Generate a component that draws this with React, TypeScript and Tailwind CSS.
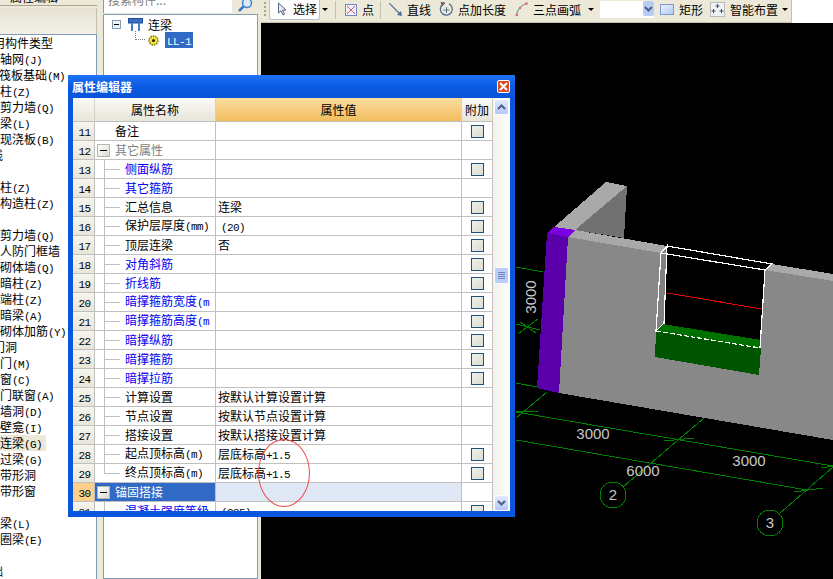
const leftItems: [string, number][] = [
	["用构件类型", -7],
	["轴网(J)", 0],
	["筏板基础(M)", -1],
	["柱(Z)", 0],
	["剪力墙(Q)", 0],
	["梁(L)", 0],
	["现浇板(B)", 0],
	["线", -9],
	["", 0],
	["柱(Z)", 0],
	["构造柱(Z)", 0],
	["", 0],
	["剪力墙(Q)", 0],
	["人防门框墙", 0],
	["砌体墙(Q)", 0],
	["暗柱(Z)", 0],
	["端柱(Z)", 0],
	["暗梁(A)", 0],
	["砌体加筋(Y)", 0],
	["门洞", -7],
	["门(M)", 0],
	["窗(C)", 0],
	["门联窗(A)", 0],
	["墙洞(D)", 0],
	["壁龛(I)", 0],
	["连梁(G)", 0],
	["过梁(G)", 0],
	["带形洞", 0],
	["带形窗", 0],
	["", 0],
	["梁(L)", 0],
	["圈梁(E)", 0],
	["", 0],
	["础", -9],
];

type Row = {
	n: number;
	name: string;
	value?: string;
	kind?: "plain" | "group" | "blue" | "black" | "active";
	check?: boolean;
	last?: boolean;
};

const rows: Row[] = [
	{ n: 11, name: "备注", kind: "plain", check: true },
	{ n: 12, name: "其它属性", kind: "group" },
	{ n: 13, name: "侧面纵筋", kind: "blue", check: true },
	{ n: 14, name: "其它箍筋", kind: "blue" },
	{ n: 15, name: "汇总信息", value: "连梁", kind: "black", check: true },
	{ n: 16, name: "保护层厚度(mm)", value: "(20)", kind: "black", check: true },
	{ n: 17, name: "顶层连梁", value: "否", kind: "black", check: true },
	{ n: 18, name: "对角斜筋", kind: "blue", check: true },
	{ n: 19, name: "折线筋", kind: "blue", check: true },
	{ n: 20, name: "暗撑箍筋宽度(m", kind: "blue", check: true },
	{ n: 21, name: "暗撑箍筋高度(m", kind: "blue", check: true },
	{ n: 22, name: "暗撑纵筋", kind: "blue", check: true },
	{ n: 23, name: "暗撑箍筋", kind: "blue", check: true },
	{ n: 24, name: "暗撑拉筋", kind: "blue", check: true },
	{ n: 25, name: "计算设置", value: "按默认计算设置计算", kind: "black" },
	{ n: 26, name: "节点设置", value: "按默认节点设置计算", kind: "black" },
	{ n: 27, name: "搭接设置", value: "按默认搭接设置计算", kind: "black" },
	{ n: 28, name: "起点顶标高(m)", value: "层底标高+1.5", kind: "black", check: true },
	{ n: 29, name: "终点顶标高(m)", value: "层底标高+1.5", kind: "black", check: true, last: true },
	{ n: 30, name: "锚固搭接", kind: "active" },
	{ n: 31, name: "混凝土强度等级", value: "(C35)", kind: "blue", check: true },
];

// SimSun latin glyphs are half a CJK cell wide, so latin runs are squeezed to 6px
function Mixed({ text }: { text: string }) {
	const parts = text.split(/([\x20-\x7e]+)/).filter(Boolean);
	return (
		<>
			{parts.map((p, i) =>
				/^[\x20-\x7e]+$/.test(p) ? (
					<span key={i} className="whitespace-pre text-[11px] tracking-[-0.6px] [font-family:'Liberation_Mono',monospace]">
						{p}
					</span>
				) : (
					<span key={i}>{p}</span>
				),
			)}
		</>
	);
}

function MinusBox({ small }: { small?: boolean }) {
	return (
		<div
			className={
				small
					? "flex h-[9px] w-[9px] items-center justify-center border border-[#7f9db9] bg-[#f2f1ea]"
					: "flex h-[13px] w-[13px] shrink-0 items-center justify-center border border-[#b5b5a8] bg-gradient-to-br from-white to-[#dcdad0]"
			}
		>
			<div className={small ? "h-px w-[5px] bg-black" : "h-px w-[7px] bg-black"} />
		</div>
	);
}

function Guide({ last }: { last?: boolean }) {
	return (
		<div className="flex h-full w-[16px] shrink-0 flex-col">
			<div className="h-[10px] border-b border-l border-[#c0c0c0]" />
			<div className={last ? "flex-1" : "flex-1 border-l border-[#c0c0c0]"} />
		</div>
	);
}

function CheckBox() {
	return <div className="h-[13px] w-[13px] border border-[#1c5180] bg-gradient-to-br from-[#f0efe8] to-[#dcdcd4]" />;
}

function TableRow({ row }: { row: Row }) {
	const active = row.kind === "active";
	const inset = row.value?.startsWith("(");
	return (
		<div className="flex h-[19px] shrink-0 border-b border-[#c0c0c0] text-[12px] leading-[18px]">
			<div
				className={
					active
						? "w-[22px] shrink-0 border-r border-[#c0c0c0] bg-[#fcd08c] pl-[2px] text-center"
						: "w-[22px] shrink-0 border-r border-[#c0c0c0] bg-gradient-to-b from-[#f6f5ee] to-[#e8e6da] pl-[2px] text-center"
				}
			>
				<Mixed text={String(row.n)} />
			</div>
			<div
				className={
					active
						? "flex w-[121px] shrink-0 items-center overflow-hidden whitespace-nowrap border-r border-[#c0c0c0] bg-[#316ac5] pl-[2px] text-white"
						: "flex w-[121px] shrink-0 items-center overflow-hidden whitespace-nowrap border-r border-[#c0c0c0]"
				}
			>
				{row.kind === "plain" && (
					<div className="pl-[20px]">
						<Mixed text={row.name} />
					</div>
				)}
				{row.kind === "group" && (
					<>
						<div className="ml-[2px]">
							<MinusBox />
						</div>
						<div className="pl-[5px] text-[#808080]">{row.name}</div>
					</>
				)}
				{active && (
					<>
						<MinusBox />
						<div className="pl-[5px]">{row.name}</div>
					</>
				)}
				{(row.kind === "blue" || row.kind === "black") && (
					<>
						<div className="ml-[9px] h-full">
							<Guide last={row.last} />
						</div>
						<div className={row.kind === "blue" ? "pl-[5px] text-[#0000f0]" : "pl-[5px] text-black"}>
							<Mixed text={row.name} />
						</div>
					</>
				)}
			</div>
			<div
				className={
					active
						? "w-[246px] shrink-0 border-r border-[#c0c0c0] bg-[#dfe8f4]"
						: inset
							? "w-[246px] shrink-0 whitespace-nowrap border-r border-[#c0c0c0] pl-[5px]"
							: "w-[246px] shrink-0 whitespace-nowrap border-r border-[#c0c0c0] pl-[2px]"
				}
			>
				{row.value && <Mixed text={row.value} />}
			</div>
			<div className="flex w-[31px] shrink-0 items-center justify-center border-r border-[#c0c0c0] pl-px">
				{row.check && <CheckBox />}
			</div>
		</div>
	);
}

function ScrollBtn({ up }: { up?: boolean }) {
	return (
		<div className="flex h-[16px] w-[15px] items-center justify-center rounded-[2px] border border-white bg-gradient-to-b from-[#e2ebfe] to-[#b4c8f6]">
			<svg width="9" height="6" viewBox="0 0 9 6">
				<path d={up ? "M1 5l3.5-3.5L8 5" : "M1 1l3.5 3.5L8 1"} fill="none" stroke="#4d6185" strokeWidth="2" />
			</svg>
		</div>
	);
}

function PropertyWindow() {
	return (
		<div className="absolute left-[68px] top-[75px] flex h-[442px] w-[447px] flex-col rounded-t-[3px] bg-[#0a56dc] text-black">
			<div className="flex h-[23px] shrink-0 items-center justify-between bg-gradient-to-b from-[#1f74f4] via-[#0a5ae4] to-[#0a54d8] pl-[4px] pr-[5px]">
				<span className="text-[12px] font-bold text-white">属性编辑器</span>
				<div className="flex h-[13px] w-[13px] items-center justify-center rounded-[2px] border border-white bg-[#dc4a24]">
					<svg width="9" height="9" viewBox="0 0 9 9">
						<path d="M1 1l7 7M8 1l-7 7" stroke="white" strokeWidth="2" />
					</svg>
				</div>
			</div>
			<div className="mx-[5px] flex h-[413px] overflow-hidden bg-white">
				<div className="flex w-[420px] shrink-0 flex-col overflow-hidden">
					<div className="flex h-[24px] shrink-0 border-b border-[#c0c0c0] text-center text-[12px] leading-[23px]">
						<div className="w-[22px] shrink-0 border-r border-[#d4d0c8] bg-gradient-to-b from-[#faf9f4] to-[#e8e6da]" />
						<div className="w-[121px] shrink-0 border-r border-[#d4d0c8] bg-gradient-to-b from-[#faf9f4] to-[#e8e6da]">属性名称</div>
						<div className="w-[246px] shrink-0 border-r border-[#d4d0c8] bg-gradient-to-b from-[#fbdc9e] to-[#f2bd5e]">属性值</div>
						<div className="w-[31px] shrink-0 border-r border-[#d4d0c8] bg-gradient-to-b from-[#faf9f4] to-[#e8e6da]">附加</div>
					</div>
					{rows.map((row) => (
						<TableRow key={row.n} row={row} />
					))}
				</div>
				<div className="flex w-[17px] flex-col items-center bg-gradient-to-r from-[#f3f1ec] to-[#fdfdfa] pt-[1px]">
					<ScrollBtn up />
					<div className="mt-[152px] flex h-[17px] w-[15px] flex-col items-center justify-center gap-px rounded-[2px] border border-white bg-[#bccdf8]">
						<div className="h-px w-[7px] bg-[#6c86c0]" />
						<div className="h-px w-[7px] bg-[#6c86c0]" />
						<div className="h-px w-[7px] bg-[#6c86c0]" />
						<div className="h-px w-[7px] bg-[#6c86c0]" />
					</div>
					<div className="mt-[211px]">
						<ScrollBtn />
					</div>
				</div>
			</div>
		</div>
	);
}

function DropArrow() {
	return <div className="h-0 w-0 shrink-0 border-x-[3px] border-t-[3px] border-x-transparent border-t-black" />;
}

function Toolbar() {
	return (
		<div className="flex h-[23px] w-[531px] shrink-0 items-center border-b border-r border-[#c4c1b0] bg-[#ece9d8] pb-[3px] text-[12px] text-black">
			<div className="ml-[3px] flex h-[16px] w-[2px] flex-col gap-[2px]">
				<div className="h-[2px] bg-[#a8a595]" />
				<div className="h-[2px] bg-[#a8a595]" />
				<div className="h-[2px] bg-[#a8a595]" />
				<div className="h-[2px] bg-[#a8a595]" />
			</div>
			<div className="ml-[3px] flex h-[21px] w-[51px] shrink-0 items-center rounded-b-[3px] border border-t-0 border-[#b4c4dc] bg-white pl-[7px]">
				<svg width="10" height="14" viewBox="0 0 10 14">
					<path d="M1.5 1v10l2.5-2.2L6 13l1.6-.8-2-4.1H9z" fill="#e8ecf4" stroke="#54647c" />
				</svg>
				<span className="ml-[6px]">选择</span>
			</div>
			<div className="ml-[2px] w-[6px]">
				<DropArrow />
			</div>
			<div className="ml-[7px] h-[18px] w-px bg-[#c4c1b0]" />
			<svg className="ml-[9px] shrink-0" width="12" height="12" viewBox="0 0 12 12">
				<rect x="0.5" y="0.5" width="11" height="11" fill="#eef0fa" stroke="#7486c0" />
				<path d="M2 2l8 8M10 2l-8 8" stroke="#d06070" />
			</svg>
			<span className="ml-[5px] w-[12px] shrink-0">点</span>
			<div className="ml-[6px] h-[18px] w-px bg-[#c4c1b0]" />
			<svg className="ml-[8px] shrink-0" width="13" height="13" viewBox="0 0 13 13">
				<path d="M0 0l11 11" stroke="#4c6c9c" strokeWidth="1.2" />
				<path d="M13 13l-1-5-4 4z" fill="#4c6c9c" />
			</svg>
			<span className="ml-[5px] w-[24px] shrink-0">直线</span>
			<svg className="ml-[8px] shrink-0" width="15" height="15" viewBox="0 0 15 15">
				<path d="M3 3a6 6 0 1 0 7-1.2" fill="none" stroke="#4c6c9c" strokeWidth="1.3" />
				<path d="M2 0l4 1-3 3zM7.500 5v6M4.500 8h6" fill="#b06040" stroke="#44587c" strokeWidth="0.8" />
			</svg>
			<span className="ml-[4px] w-[48px] shrink-0">点加长度</span>
			<svg className="ml-[9px] shrink-0" width="13" height="15" viewBox="0 0 13 15">
				<path d="M1.500 14C2 8 6 3 12 1.500" fill="none" stroke="#6c8cb4" strokeWidth="1.2" />
				<circle cx="1.800" cy="13" r="1.300" fill="#e07060" />
				<circle cx="5" cy="6" r="1.200" fill="#e07060" />
				<circle cx="11.500" cy="1.600" r="1.300" fill="#e07060" />
			</svg>
			<span className="ml-[5px] w-[48px] shrink-0">三点画弧</span>
			<div className="ml-[7px] w-[6px]">
				<DropArrow />
			</div>
			<div className="ml-[6px] flex h-[17px] w-[54px] shrink-0 justify-end bg-white">
				<div className="flex h-[15px] w-[11px] items-center justify-center rounded-[2px] bg-[#b8ccf6]">
					<svg width="9" height="6" viewBox="0 0 9 6">
						<path d="M1 1l3.500 3.500L8 1" fill="none" stroke="#4d6185" strokeWidth="2" />
					</svg>
				</div>
			</div>
			<div className="ml-[6px] h-[11px] w-[14px] shrink-0 border border-[#7a9ad4] bg-gradient-to-br from-[#eaf0fc] to-[#b4cbf4]" />
			<span className="ml-[5px] w-[24px] shrink-0">矩形</span>
			<svg className="ml-[7px] shrink-0" width="15" height="15" viewBox="0 0 15 15">
				<rect x="0.500" y="0.500" width="14" height="14" fill="#f0f2f4" stroke="#808890" strokeDasharray="1 1" />
				<path d="M7.500 2v4M5.500 4h4M3.500 7v4M1.500 9h4M11.500 7v4M9.500 9h4" stroke="#405060" />
			</svg>
			<span className="ml-[5px] w-[48px] shrink-0">智能布置</span>
			<div className="ml-[4px] w-[6px]">
				<DropArrow />
			</div>
		</div>
	);
}

function Scene() {
	const green = "#008000";
	const lines = [
		[516, 267, 543, 272],
		[516, 324, 540, 330],
		[520, 322, 536, 333],
		[518, 334, 538, 319],
		[516, 383, 537, 387],
		[516, 418, 547, 392],
		[516, 412, 833, 466],
		[516, 440, 807, 490],
		[516, 412, 538, 411],
		[664, 441, 694, 438],
		[794, 492, 823, 488],
		[821, 468, 833, 466],
		[623, 487, 704, 418],
		[779, 514, 833, 467],
	];
	return (
		<svg className="h-full w-full" viewBox="261 23 572 556" shapeRendering="crispEdges">
			{lines.map((l, i) => (
				<line key={i} x1={l[0]} y1={l[1]} x2={l[2]} y2={l[3]} stroke={green} />
			))}
			<circle cx="613" cy="495" r="13" fill="none" stroke={green} />
			<circle cx="770" cy="523" r="13" fill="none" stroke={green} />

			<polygon points="554,227 606,182 627,186 575,230" fill="#a9a9a9" />
			<polygon points="627,186 624,238 575,230" fill="#717171" />
			<polygon points="568,237 575,230 667,246 661,253" fill="#a9a9a9" />
			<polygon points="765,270 772,264 833,274 833,281" fill="#a9a9a9" />
			<polygon points="568,237 661,253 655,357 759,375 765,270 833,281 833,440 559,393" fill="#888888" />
			<polygon points="661,253 667,246 664,324 656,331" fill="#808080" />
			<polygon points="547,233 554,227 575,230 568,237" fill="#7a00e0" />
			<polygon points="547,233 568,237 559,393 537,388" fill="#5a00aa" />
			<polygon points="656,331 663,324 761,340 761,348" fill="#007000" />
			<polygon points="656,331 761,348 759,375 655,357" fill="#005500" />

			<line x1="667" y1="293" x2="762" y2="309" stroke="#f00000" />
			<g fill="none" stroke="white" strokeWidth="1.200">
				<path d="M667 246L772 264L765 270L661 253L667 246L664 324" />
				<path d="M661 253L656 331L663 324" />
				<path d="M765 270L760 348" />
				<path d="M656 331L760 348" strokeDasharray="5 2" />
			</g>

			<g fill="#c8c8c8" fontSize="15" textAnchor="middle" fontFamily="'Liberation Sans', sans-serif">
				<text x="593" y="439">3000</text>
				<text x="643" y="476">6000</text>
				<text x="749" y="466">3000</text>
				<text x="613" y="500">2</text>
				<text x="770" y="528">3</text>
				<text x="0" y="0" transform="translate(536 297) rotate(-90)">3000</text>
			</g>
		</svg>
	);
}

export default function App() {
	return (
		<div className="relative flex h-[579px] w-[833px] overflow-hidden bg-white text-black [font-family:'Noto_Sans_CJK_SC',sans-serif]">
			{/* component list */}
			<div className="flex w-[97px] shrink-0 flex-col bg-[#ece9d8]">
				<div className="h-[6px] shrink-0 overflow-hidden border-b border-[#a8a595] text-[12px] leading-[12px]">
					<div className="-mt-[9px] pl-[10px]">属性编辑</div>
				</div>
				<div className="mt-[2px] h-[26px] shrink-0 border-r border-[#c4c1b0] bg-gradient-to-b from-[#e6e3d4] to-[#f2f0e6]" />
				<div className="flex-1 overflow-hidden border-r border-t border-[#7f9db9] bg-white text-[12px]">
					{leftItems.map(([label, offset], i) => (
						<div
							key={i}
							className={label === "连梁(G)" ? "h-[16px] w-[46px] whitespace-nowrap bg-[#ece9d8] leading-[16px]" : "h-[16px] whitespace-nowrap leading-[16px]"}
							style={{ marginLeft: offset }}
						>
							<Mixed text={label} />
						</div>
					))}
				</div>
			</div>

			{/* tree */}
			<div className="flex w-[164px] shrink-0 flex-col bg-[#ece9d8] pl-[6px] pr-[3px]">
				<div className="flex h-[14px] shrink-0">
					<div className="h-[13px] w-[129px] overflow-hidden border-l border-[#7f9db9] bg-white pl-[4px] text-[12px] leading-[12px] text-[#808080]">
						<div className="-mt-[6px]">搜索构件...</div>
					</div>
					<div className="flex flex-1 justify-center overflow-hidden">
						<svg className="-mt-[3px]" width="15" height="15" viewBox="0 0 15 15">
							<circle cx="9" cy="6" r="4.500" fill="#dbe8f8" stroke="#3c88d0" strokeWidth="1.500" />
							<path d="M5.500 9.500L1 14" stroke="#3c78c0" strokeWidth="2.500" />
						</svg>
					</div>
				</div>
				<div className="flex-1 border border-[#7f9db9] bg-white text-[12px]">
					<div className="ml-[8px] mt-[2px] flex h-[15px] items-center">
						<MinusBox small />
						<svg className="ml-[7px]" width="15" height="14" viewBox="0 0 15 14">
							<rect x="0.500" y="0.500" width="14" height="4.500" fill="#3a6cc0" stroke="#1c4c9c" />
							<path d="M4 5v8M11 5v8" stroke="#4a7cd0" strokeWidth="2" />
						</svg>
						<span className="ml-[5px]">连梁</span>
					</div>
					<div className="ml-[31px] mt-0 flex h-[16px] items-center">
						<div className="-mt-[9px] h-[9px] w-[10px] border-b border-l border-dotted border-[#808080]" />
						<svg className="ml-[3px]" width="11" height="11" viewBox="0 0 11 11">
							<circle cx="5.500" cy="5.500" r="4.500" fill="#f4e23c" stroke="#7c7000" strokeWidth="1.500" strokeDasharray="1.500 1" />
							<circle cx="5.500" cy="5.500" r="1.500" fill="#202000" />
						</svg>
						<span className="ml-[6px] h-[16px] w-[28px] whitespace-nowrap bg-[#316ac5] pl-[2px] leading-[16px] text-white">
							<Mixed text="LL-1" />
						</span>
					</div>
				</div>
			</div>

			{/* drawing area */}
			<div className="flex min-w-0 flex-1 flex-col">
				<div className="flex h-[23px] shrink-0">
					<Toolbar />
				</div>
				<div className="min-h-0 flex-1 bg-black">
					<Scene />
				</div>
			</div>

			<PropertyWindow />
			{/* hand-drawn annotation on the screenshot */}
			<div className="absolute left-[258px] top-[439px] h-[68px] w-[52px] rounded-[50%] border border-[#f04848]" />
		</div>
	);
}
